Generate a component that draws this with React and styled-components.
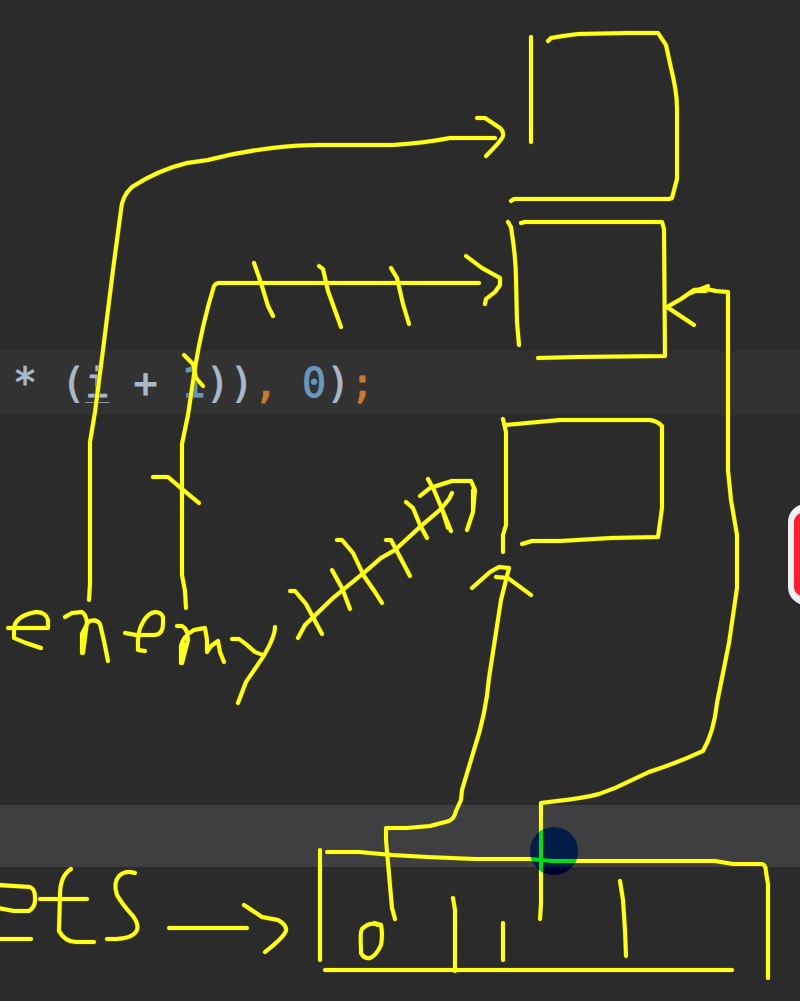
import React from 'react';
import styled, { createGlobalStyle } from 'styled-components';

const GlobalStyle = createGlobalStyle`
  * { box-sizing: border-box; }
  body { margin: 0; background: #2c2b2c; }
`;

const Editor = styled.main`
  position: relative;
  min-height: 100vh;
  overflow: hidden;
  background: #2c2b2c;
`;

const CodeArea = styled.div`
  display: flex;
  flex-direction: column;
  gap: 390px;
  padding: 351px 0 134px;
`;

const CodeLine = styled.pre`
  margin: 0;
  height: 64px;
  padding-left: 13px;
  background: #323233;
  color: #a9b7c6;
  font: 40px/64px 'DejaVu Sans Mono', monospace;
  -webkit-text-stroke: 1px currentColor;
`;

const Token = styled.span`
  color: ${({ $kind }) => ({ number: '#6897bb', punctuation: '#cc7832' })[$kind] || 'inherit'};
`;

const Variable = styled.span`
  text-decoration: underline;
  text-decoration-color: #8c959e;
  text-decoration-thickness: 1px;
  text-underline-offset: 5px;
`;

const StatusBand = styled.div`
  height: 62px;
  background: #3f3f42;
`;

const RecordButton = styled.button`
  position: absolute;
  top: 504px;
  right: -88px;
  width: 100px;
  height: 101px;
  border: solid #f1eff1;
  border-width: 8px 6px;
  border-radius: 18px;
  background: #fa1f30;
  padding: 0;
`;

const Ink = styled.svg`
  position: absolute;
  top: 0;
  left: 0;
  width: 800px;
  height: 1001px;
  pointer-events: none;
`;

const strokes = [
  // boxes
  'M531 37V142',
  'M548 41L551 38L563 36L578 34L628 33H658L666 45L671 68Q677 92 677 108V179L672 198L669 199H514L511 201',
  'M508 222L511 227Q516 258 516 280L517 322L519 345',
  'M521 223L525 222H662L664 229L665 356L577 357L538 358',
  'M503 419L506 432V525L503 535V552',
  'M506 425L560 420H650Q657 421 662 426V508L658 537L611 538L560 541L532 541L522 544',
  // first pointer
  'M89 600L90 584V442L95 412L103 350L113 270L121 210Q122 196 132 187Q158 170 187 163L208 160Q238 152 272 148Q295 145 320 145H393Q425 143 450 138H495',
  'M477 118H485L500 128Q504 132 503 136Q502 140 486 156',
  // second pointer
  'M186 608L185 591L182 575V444L188 415L195 368Q202 325 214 286Q216 283 219 283H479',
  'M466 256L482 268L500 278V285L495 292L486 299L485 304',
  'M254 263L261 283L268 306L273 316',
  'M319 266L323 269L328 291L341 327',
  'M391 268L397 278L403 304L409 324',
  'M184 355L193 364L196 378L203 386',
  'M153 477H168L182 489L199 503',
  // enemy
  'M8 628H48V620Q46 612 36 612Q14 616 14 630V638L26 643L41 648',
  'M65 617L72 613L82 612Q86 615 87 622L86 630L83 653M82 653V634L88 622Q96 618 100 624L104 641L108 661M85 630L83 645',
  'M125 633L136 635H155Q163 634 163 624V617Q161 612 155 612Q148 613 143 622Q137 631 138 650L145 651',
  'M177 626H182Q188 629 188 640L182 663M181 663V646Q183 636 194 630L205 628L207 640V652M207 652L211 646L218 641L220 652L224 662M184 644L182 658',
  'M232 639H239L247 645L255 652L263 655M275 627Q275 637 263 657L246 682L238 703',
  // crossed-out pointer
  'M298 638L305 625L333 598L366 571L381 558L395 550L421 526L441 509L449 499L452 493',
  'M290 591L295 591L306 604L314 619L322 634',
  'M332 570L342 588L350 609',
  'M337 540H342L353 553L364 576L375 592L382 603',
  'M386 540L391 540L400 557L410 576',
  'M406 502L413 508L420 525L427 538',
  'M428 479L434 490L442 509L451 531M442 509L448 528',
  'M420 496L430 488L452 481H471L475 490L473 512L467 530M473 490V510',
  // array cells to boxes
  'M395 919L392 908L386 840V828L407 828L430 826L449 821Q454 819 456 811L461 800L462 790L474 750Q486 714 489 678L501 600L509 568L499 567L490 572L472 588',
  'M496 577L508 578L531 595',
  'M540 919L541 904V803L557 801Q584 798 599 794L615 788L649 772Q677 763 703 751Q714 732 717 703L729 643L737 588V535L731 500L728 470V292L716 291L706 289L694 290L681 299L667 307L694 325',
  'M691 293L708 286M694 291H706',
  // array
  'M320 850V960',
  'M327 852H359L392 855L427 857L475 859H530L552 861H715L733 864H762Q766 865 766 872L768 884V978',
  'M325 970H732',
  'M453 898L455 910V971',
  'M503 923V960',
  'M620 881L623 900L625 930L626 956',
  'M378 925Q370 921 362 929Q360 932 361 948V953Q364 959 370 958Q376 956 381 945Q383 935 381 925Q378 924 374 923',
  // ets
  'M-2 885L30 887Q35 889 35 897Q36 907 29 911H14L-2 908M-2 939H31',
  'M71 869Q60 876 60 895L59 931Q65 942 76 942H94M40 899H87',
  'M135 873Q125 870 119 876Q113 883 117 895Q122 904 133 916Q139 924 137 930Q133 940 107 939',
  'M169 928H247',
  'M244 905L262 917L278 920Q287 925 286 931Q283 938 265 952',
];

function Strokes({ color, width }) {
  return (
    <g stroke={color} strokeWidth={width} fill="none" strokeLinecap="round" strokeLinejoin="round">
      {strokes.map((d) => <path key={d} d={d} />)}
    </g>
  );
}

export default function App() {
  return (
    <>
      <GlobalStyle />
      <Editor>
        <CodeArea>
          <CodeLine>
            {'* ('}<Variable>i</Variable>{' + '}<Token $kind="number">1</Token>{'))'}
            <Token $kind="punctuation">,</Token>{' '}
            <Token $kind="number">0</Token>{')'}
            <Token $kind="punctuation">;</Token>
          </CodeLine>
          <StatusBand />
        </CodeArea>
        <RecordButton type="button" aria-label="Record" />
        <Ink viewBox="0 0 800 1001" aria-hidden="true">
          <defs>
            <clipPath id="pen"><circle cx="554" cy="851" r="24" /></clipPath>
          </defs>
          <Strokes color="#5a5918" width="5" />
          <Strokes color="#ffff1c" width="4" />
          <g clipPath="url(#pen)">
            <rect x="530" y="827" width="48" height="40" fill="#011d46" />
            <rect x="530" y="867" width="48" height="8" fill="#01012f" />
            <Strokes color="#00df16" width="4" />
          </g>
        </Ink>
      </Editor>
    </>
  );
}
